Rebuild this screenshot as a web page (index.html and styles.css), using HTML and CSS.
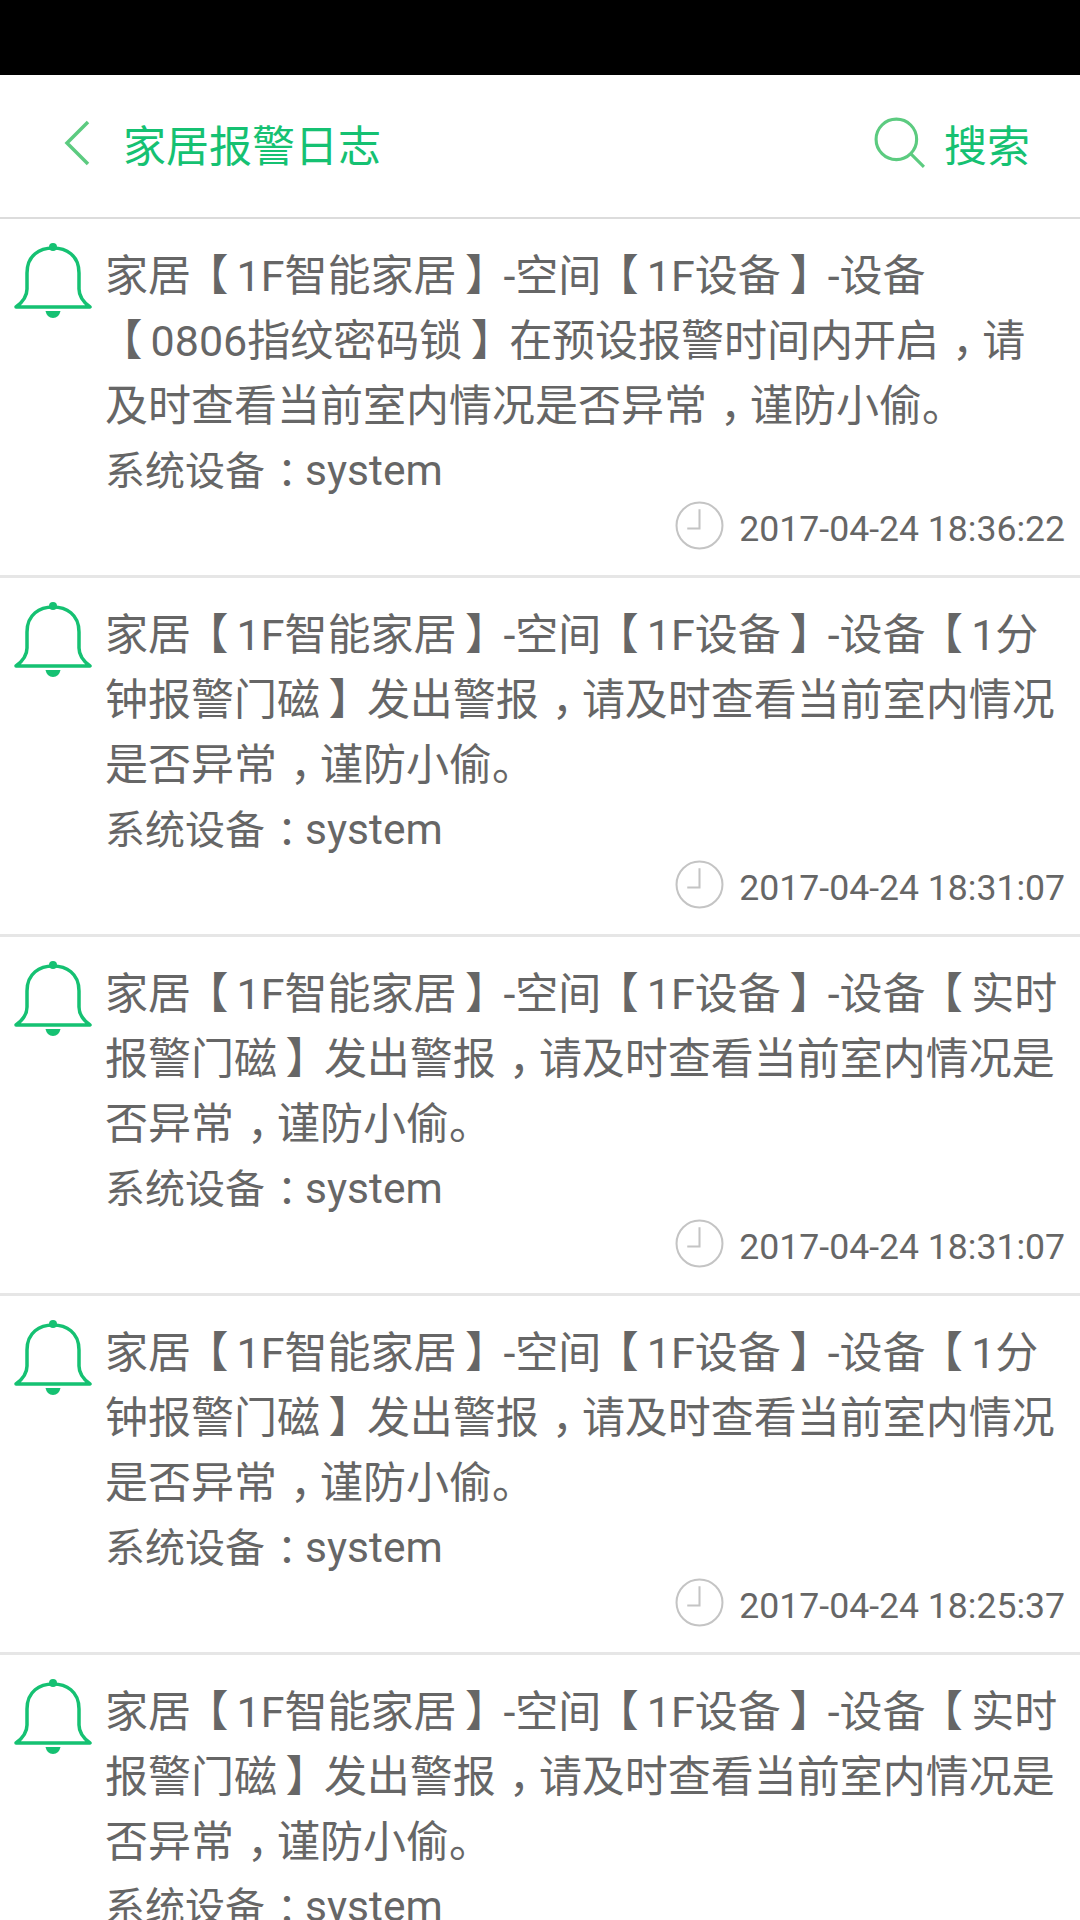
FILE: index.html
```html
<!DOCTYPE html>
<html lang="zh-CN">
<head>
	<meta charset="utf-8">
	<meta name="viewport" content="width=device-width">
	<title>家居报警日志</title>
	<link rel="stylesheet" href="styles.css">
</head>
<body>

	<div class="status-bar"></div>

	<header class="top-bar">
		<div class="top-left">
			<svg class="back-icon" viewBox="0 0 26 46">
				<polyline points="24,2 3,23 24,44"/>
			</svg>
			<span class="top-title">家居报警日志</span>
		</div>
		<div class="top-right">
			<svg class="search-icon" viewBox="0 0 50 50">
				<circle cx="21.5" cy="21.5" r="19.5"/>
				<line x1="35" y1="35" x2="48" y2="48"/>
			</svg>
			<span class="top-title">搜索</span>
		</div>
	</header>

	<section class="log-list">

		<article class="log-item">
			<svg class="bell-icon" viewBox="0 0 78 76">
				<path d="M2 64 Q13 56 13 46 V30 C13 12 26 5 39 5 C52 5 65 12 65 30 V46 Q65 56 76 64 Z"/>
				<circle class="bell-dot" cx="39" cy="4" r="4"/>
				<path class="bell-dot" d="M31.5 68 H46.5 Q45 75 39 75 Q33 75 31.5 68 Z"/>
			</svg>
			<div class="log-body">
				<p class="log-text">家居<span class="lb">【</span>1F智能家居<span class="rb">】</span>-空间<span class="lb">【</span>1F设备<span class="rb">】</span>-设备<span class="lb">【</span>0806指纹密码锁<span class="rb">】</span>在预设报警时间内开启<span class="mark">，</span>请及时查看当前室内情况是否异常<span class="mark">，</span>谨防小偷。</p>
				<p class="log-source">系统设备<span class="mark">：</span><span class="log-user">system</span></p>
				<div class="log-time">
					<svg class="clock-icon" viewBox="0 0 48 48">
						<circle cx="24" cy="24" r="22.5"/>
						<polyline points="24,8 24,27 12,27"/>
					</svg>
					<span>2017-04-24 18:36:22</span>
				</div>
			</div>
		</article>

		<article class="log-item">
			<svg class="bell-icon" viewBox="0 0 78 76">
				<path d="M2 64 Q13 56 13 46 V30 C13 12 26 5 39 5 C52 5 65 12 65 30 V46 Q65 56 76 64 Z"/>
				<circle class="bell-dot" cx="39" cy="4" r="4"/>
				<path class="bell-dot" d="M31.5 68 H46.5 Q45 75 39 75 Q33 75 31.5 68 Z"/>
			</svg>
			<div class="log-body">
				<p class="log-text">家居<span class="lb">【</span>1F智能家居<span class="rb">】</span>-空间<span class="lb">【</span>1F设备<span class="rb">】</span>-设备<span class="lb">【</span>1分钟报警门磁<span class="rb">】</span>发出警报<span class="mark">，</span>请及时查看当前室内情况是否异常<span class="mark">，</span>谨防小偷。</p>
				<p class="log-source">系统设备<span class="mark">：</span><span class="log-user">system</span></p>
				<div class="log-time">
					<svg class="clock-icon" viewBox="0 0 48 48">
						<circle cx="24" cy="24" r="22.5"/>
						<polyline points="24,8 24,27 12,27"/>
					</svg>
					<span>2017-04-24 18:31:07</span>
				</div>
			</div>
		</article>

		<article class="log-item">
			<svg class="bell-icon" viewBox="0 0 78 76">
				<path d="M2 64 Q13 56 13 46 V30 C13 12 26 5 39 5 C52 5 65 12 65 30 V46 Q65 56 76 64 Z"/>
				<circle class="bell-dot" cx="39" cy="4" r="4"/>
				<path class="bell-dot" d="M31.5 68 H46.5 Q45 75 39 75 Q33 75 31.5 68 Z"/>
			</svg>
			<div class="log-body">
				<p class="log-text">家居<span class="lb">【</span>1F智能家居<span class="rb">】</span>-空间<span class="lb">【</span>1F设备<span class="rb">】</span>-设备<span class="lb">【</span>实时报警门磁<span class="rb">】</span>发出警报<span class="mark">，</span>请及时查看当前室内情况是否异常<span class="mark">，</span>谨防小偷。</p>
				<p class="log-source">系统设备<span class="mark">：</span><span class="log-user">system</span></p>
				<div class="log-time">
					<svg class="clock-icon" viewBox="0 0 48 48">
						<circle cx="24" cy="24" r="22.5"/>
						<polyline points="24,8 24,27 12,27"/>
					</svg>
					<span>2017-04-24 18:31:07</span>
				</div>
			</div>
		</article>

		<article class="log-item">
			<svg class="bell-icon" viewBox="0 0 78 76">
				<path d="M2 64 Q13 56 13 46 V30 C13 12 26 5 39 5 C52 5 65 12 65 30 V46 Q65 56 76 64 Z"/>
				<circle class="bell-dot" cx="39" cy="4" r="4"/>
				<path class="bell-dot" d="M31.5 68 H46.5 Q45 75 39 75 Q33 75 31.5 68 Z"/>
			</svg>
			<div class="log-body">
				<p class="log-text">家居<span class="lb">【</span>1F智能家居<span class="rb">】</span>-空间<span class="lb">【</span>1F设备<span class="rb">】</span>-设备<span class="lb">【</span>1分钟报警门磁<span class="rb">】</span>发出警报<span class="mark">，</span>请及时查看当前室内情况是否异常<span class="mark">，</span>谨防小偷。</p>
				<p class="log-source">系统设备<span class="mark">：</span><span class="log-user">system</span></p>
				<div class="log-time">
					<svg class="clock-icon" viewBox="0 0 48 48">
						<circle cx="24" cy="24" r="22.5"/>
						<polyline points="24,8 24,27 12,27"/>
					</svg>
					<span>2017-04-24 18:25:37</span>
				</div>
			</div>
		</article>

		<article class="log-item">
			<svg class="bell-icon" viewBox="0 0 78 76">
				<path d="M2 64 Q13 56 13 46 V30 C13 12 26 5 39 5 C52 5 65 12 65 30 V46 Q65 56 76 64 Z"/>
				<circle class="bell-dot" cx="39" cy="4" r="4"/>
				<path class="bell-dot" d="M31.5 68 H46.5 Q45 75 39 75 Q33 75 31.5 68 Z"/>
			</svg>
			<div class="log-body">
				<p class="log-text">家居<span class="lb">【</span>1F智能家居<span class="rb">】</span>-空间<span class="lb">【</span>1F设备<span class="rb">】</span>-设备<span class="lb">【</span>实时报警门磁<span class="rb">】</span>发出警报<span class="mark">，</span>请及时查看当前室内情况是否异常<span class="mark">，</span>谨防小偷。</p>
				<p class="log-source">系统设备<span class="mark">：</span><span class="log-user">system</span></p>
			</div>
		</article>

	</section>

</body>
</html>
```

FILE: styles.css
```css
* {
	box-sizing: border-box;
	padding: 0;
	margin: 0;
}

html, body {
	height: 1920px;
	overflow: hidden;
}

body {
	background-color: #FFF;
	font-family: Roboto, "Noto Sans CJK SC", sans-serif;
	color: #666;
}

.status-bar {
	height: 75px;
	background-color: #000;
}

.top-bar {
	display: flex;
	justify-content: space-between;
	align-items: center;
	height: 144px;
	padding: 0 50px 6px 64px;
	border-bottom: 2px solid #DCDCDC;
}

.top-left,
.top-right {
	display: flex;
	align-items: center;
}

.top-title {
	font-size: 43px;
	color: #15C172;
}

.back-icon {
	width: 26px;
	height: 46px;
	margin-right: 33px;
	fill: none;
	stroke: #5CCB80;
	stroke-width: 3.5;
}

.search-icon {
	width: 52px;
	height: 52px;
	margin-right: 18px;
	fill: none;
	stroke: #5CCB80;
	stroke-width: 3;
}

.log-item {
	display: flex;
	height: 359px;
	padding: 25px 10px 0 14px;
	border-bottom: 3px solid #E6E6E6;
}

.bell-icon {
	flex: none;
	width: 78px;
	height: 76px;
	margin-top: -1px;
	margin-right: 13px;
	fill: none;
	stroke: #15C172;
	stroke-width: 3.5;
	stroke-linejoin: round;
}

.bell-dot {
	fill: #15C172;
	stroke: none;
}

.log-body {
	flex: 1;
	min-width: 0;
}

.log-text {
	font-size: 43px;
	line-height: 65px;
	padding-right: 7px;
}

/* the noto marks sit at the cell edge, the reference has them nearer the middle */
.lb {
	margin-left: -.13em;
	margin-right: .19em;
}

.rb {
	margin-left: .2em;
	letter-spacing: -.11em;
}

.mark {
	margin-left: .3em;
	letter-spacing: -.3em;
}

.log-source {
	font-size: 40px;
	line-height: 63px;
}

.log-user {
	font-size: 42.5px;
	letter-spacing: 0;
}

.log-time {
	display: flex;
	justify-content: flex-end;
	align-items: center;
	height: 48px;
	padding-right: 5px;
	margin-top: 2px;
	font-size: 35.6px;
}

.clock-icon {
	width: 49px;
	height: 49px;
	margin-right: 15px;
	margin-bottom: 7px;
	fill: none;
	stroke: #C4C4C4;
	stroke-width: 2;
}
```
